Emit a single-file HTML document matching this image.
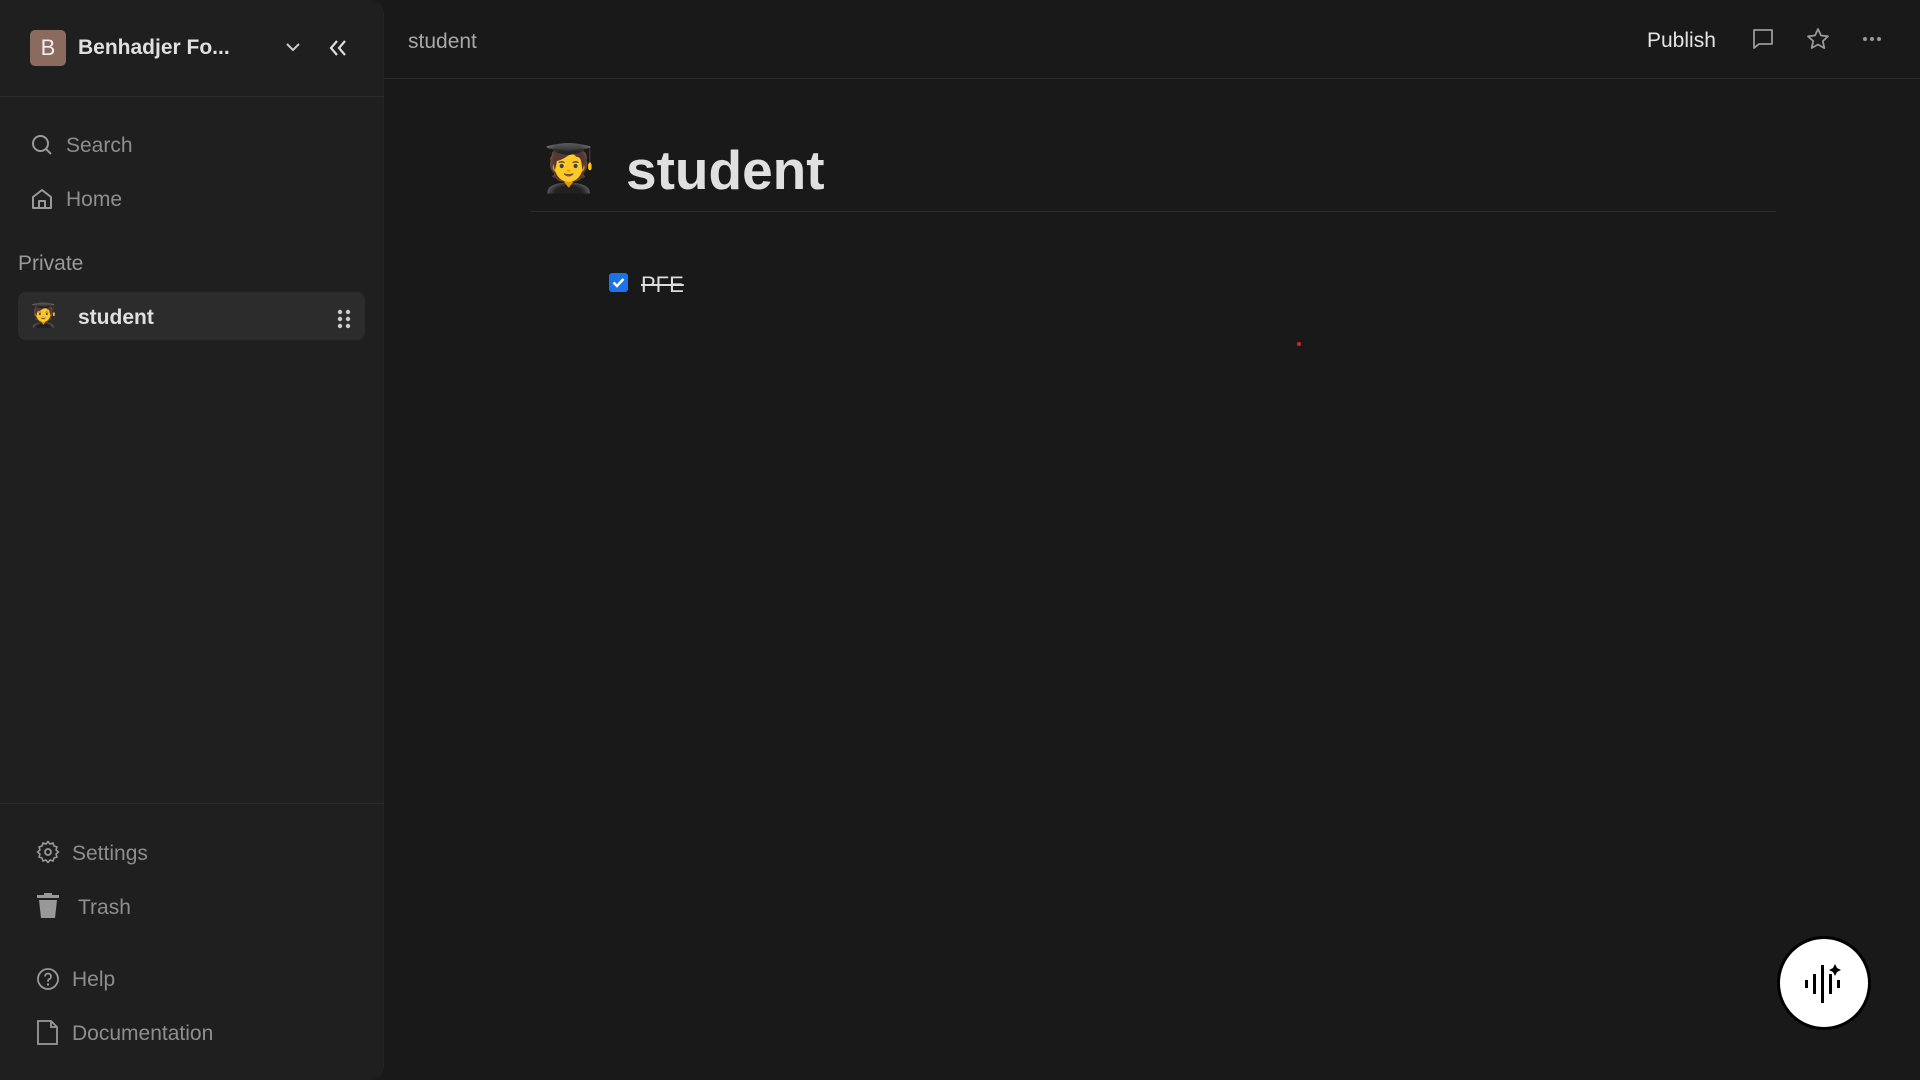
<!DOCTYPE html>
<html><head><meta charset="utf-8"><style>
*{margin:0;padding:0;box-sizing:border-box}
body{width:1920px;height:1080px;background:#191919;font-family:"Liberation Sans","Noto Sans CJK JP",sans-serif;position:relative;overflow:hidden;color:#ddd}
.sb{position:absolute;left:0;top:0;width:384px;height:1080px;background:#1f1f1f;border-right:1px solid #232323;border-radius:0 14px 14px 0}
.a{position:absolute;white-space:nowrap}
.g{color:#8e8e8e;font-size:21px}
svg{position:absolute}
</style></head><body>
<div class="sb">
  <div class="a" style="left:30px;top:30px;width:36px;height:36px;border-radius:5px;background:#8c6b5f;color:#eee;font-size:22px;text-align:center;line-height:36px">B</div>
  <div class="a" style="left:78px;top:36px;font-size:21px;font-weight:bold;color:#e0e0e0">Benhadjer Fo...</div>
  <svg style="left:284px;top:40px" width="18" height="14" viewBox="0 0 18 14"><path d="M3 4l6 6 6-6" fill="none" stroke="#ccc" stroke-width="2"/></svg>
  <svg style="left:327px;top:38px" width="22" height="20" viewBox="0 0 22 20"><path d="M10 3L4 10l6 7M18 3l-6 7 6 7" fill="none" stroke="#ddd" stroke-width="2.2"/></svg>
  <div class="a" style="left:0;top:96px;width:384px;height:1px;background:#2c2c2c"></div>
  <svg style="left:31px;top:134px" width="22" height="22" viewBox="0 0 22 22"><circle cx="9.5" cy="9.5" r="7.5" fill="none" stroke="#999" stroke-width="2"/><path d="M15 15l5 5" stroke="#999" stroke-width="2"/></svg>
  <div class="a g" style="left:66px;top:134px">Search</div>
  <svg style="left:31px;top:188px" width="22" height="22" viewBox="0 0 22 22"><path d="M2 9L11 2l9 7v11H2z M8 20v-7h6v7" fill="none" stroke="#999" stroke-width="2" stroke-linejoin="round"/></svg>
  <div class="a g" style="left:66px;top:188px">Home</div>
  <div class="a" style="left:18px;top:252px;font-size:21px;color:#9a9a9a">Private</div>
  <div class="a" style="left:18px;top:292px;width:347px;height:48px;border-radius:8px;background:#2c2c2c"></div>
  <div class="a" style="left:29px;top:302px;font-size:23px">🧑‍🎓</div>
  <div class="a" style="left:78px;top:306px;font-size:21px;font-weight:bold;color:#e0e0e0">student</div>
  <svg style="left:337px;top:309px" width="14" height="20" viewBox="0 0 14 20"><g fill="#ccc"><circle cx="3" cy="3" r="2.2"/><circle cx="11" cy="3" r="2.2"/><circle cx="3" cy="10" r="2.2"/><circle cx="11" cy="10" r="2.2"/><circle cx="3" cy="17" r="2.2"/><circle cx="11" cy="17" r="2.2"/></g></svg>
  <div class="a" style="left:0;top:803px;width:384px;height:1px;background:#2a2a2a"></div>
  <svg style="left:36px;top:840px" width="24" height="24" viewBox="0 0 24 24"><circle cx="12" cy="12" r="3" fill="none" stroke="#999" stroke-width="1.8"/><path d="M12 1.5l2 2.5 3-1 1 3 3 1-1 3 2.5 2-2.5 2 1 3-3 1-1 3-3-1-2 2.5-2-2.5-3 1-1-3-3-1 1-3L1.5 12 4 10l-1-3 3-1 1-3 3 1z" fill="none" stroke="#999" stroke-width="1.6" stroke-linejoin="round"/></svg>
  <div class="a g" style="left:72px;top:842px">Settings</div>
  <svg style="left:37px;top:893px" width="22" height="26" viewBox="0 0 22 26"><rect x="0" y="2" width="22" height="3" fill="#999"/><rect x="7" y="0" width="8" height="3" fill="#999"/><path d="M2 7h18l-2 18H4z" fill="#999"/></svg>
  <div class="a g" style="left:78px;top:896px">Trash</div>
  <svg style="left:36px;top:967px" width="24" height="24" viewBox="0 0 24 24"><circle cx="12" cy="12" r="10" fill="none" stroke="#999" stroke-width="1.8"/><path d="M9 9.5a3 3 0 1 1 4 2.8c-.8.4-1 1-1 2v.5" fill="none" stroke="#999" stroke-width="1.8"/><circle cx="12" cy="17.5" r="1.2" fill="#999"/></svg>
  <div class="a g" style="left:72px;top:968px">Help</div>
  <svg style="left:37px;top:1020px" width="22" height="25" viewBox="0 0 22 25"><path d="M1 1h13l6 6v17H1z M14 1v6h6" fill="none" stroke="#999" stroke-width="1.8"/></svg>
  <div class="a g" style="left:72px;top:1022px">Documentation</div>
</div>
<div class="a" style="left:384px;top:78px;width:1536px;height:1px;background:#2a2a2a"></div>
<div class="a" style="left:408px;top:30px;font-size:21px;color:#a8a8a8">student</div>
<div class="a" style="left:1647px;top:29px;font-size:21px;color:#e4e4e4">Publish</div>
<svg style="left:1752px;top:28px" width="22" height="22" viewBox="0 0 22 22"><path d="M2 2h18v14H7l-5 4z" fill="none" stroke="#999" stroke-width="1.8" stroke-linejoin="round"/></svg>
<svg style="left:1806px;top:27px" width="24" height="23" viewBox="0 0 24 23"><path d="M12 2l3 6.5 7 .8-5.2 4.8 1.5 7L12 17.5 5.7 21l1.5-7L2 9.3l7-.8z" fill="none" stroke="#999" stroke-width="1.8" stroke-linejoin="round"/></svg>
<svg style="left:1862px;top:36px" width="20" height="6" viewBox="0 0 20 6"><g fill="#999"><circle cx="3" cy="3" r="2"/><circle cx="10" cy="3" r="2"/><circle cx="17" cy="3" r="2"/></g></svg>
<div class="a" style="left:540px;top:138px;font-size:46px;line-height:60px">🧑‍🎓</div>
<div class="a" style="left:626px;top:137px;font-size:55px;font-weight:bold;color:#e0e0e0;line-height:66px">student</div>
<div class="a" style="left:530px;top:211px;width:1246px;height:1px;background:#2c2c2c"></div>
<div class="a" style="left:609px;top:273px;width:19px;height:19px;border-radius:3px;background:#1a73e8"></div>
<svg style="left:609px;top:273px" width="19" height="19" viewBox="0 0 19 19"><path d="M4.5 9.5l3.5 3.5 6.5-7" fill="none" stroke="#fff" stroke-width="2.5"/></svg>
<div class="a" style="left:641px;top:272px;font-size:22px;color:#ddd;text-decoration:line-through">PFE</div>
<div class="a" style="left:1297px;top:342px;width:4px;height:4px;border-radius:50%;background:#e02020"></div>
<div class="a" style="left:1777px;top:936px;width:94px;height:94px;border-radius:50%;background:#fff;border:3px solid #000"></div>
<svg style="left:1802px;top:960px" width="46" height="46" viewBox="0 0 46 46"><g fill="#000"><rect x="3" y="20" width="3" height="8"/><rect x="11" y="14" width="3" height="20"/><rect x="19" y="5" width="3" height="38"/><rect x="27" y="14" width="3" height="20"/><rect x="35" y="20" width="3" height="8"/><path d="M33 4l2 4 4 2-4 2-2 4-2-4-4-2 4-2z"/></g></svg>
</body></html>
